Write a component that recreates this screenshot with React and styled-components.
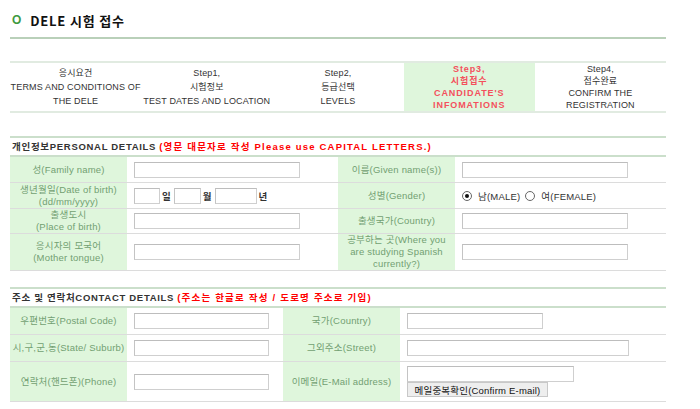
import React from "react";
import styled, { createGlobalStyle } from "styled-components";

const GlobalStyle = createGlobalStyle`
  body {
    margin: 0;
    background: #fff;
    font-family: "Liberation Sans", "Noto Sans CJK KR", sans-serif;
    font-size: 9.5px;
    color: #333;
  }
`;

const Page = styled.div`
  width: 656px;
  padding-left: 10px;
`;

const TitleBar = styled.h2`
  margin: 0;
  height: 39px;
  box-sizing: border-box;
  padding: 3px 0 0 2px;
  border-bottom: 2px solid #b9d0b9;
  display: flex;
  align-items: center;
  gap: 8px;
  font-family: "Noto Sans CJK KR", "Liberation Sans", sans-serif;
  font-size: 13px;
  font-weight: 700;
  color: #111;
  letter-spacing: 0.8px;

  .bullet {
    color: #3f9a3f;
    font-family: "Liberation Sans", sans-serif;
    font-size: 12px;
  }
`;

const Steps = styled.div`
  margin-top: 22px;
  height: 52px;
  box-sizing: border-box;
  display: grid;
  grid-template-columns: repeat(5, 1fr);
  border-top: 2px solid #e1ebe1;
  border-bottom: 2px solid #e1ebe1;
`;

const Step = styled.div`
  display: flex;
  flex-direction: column;
  justify-content: center;
  align-items: center;
  text-align: center;
  white-space: nowrap;
  font-size: 9px;
  line-height: ${(p) => p.$lh}px;
  letter-spacing: ${(p) => (p.$active ? "0.9px" : "0.15px")};
  background: ${(p) => (p.$active ? "#dff6dc" : "transparent")};
  color: ${(p) => (p.$active ? "#f4505c" : "#333")};
  font-weight: ${(p) => (p.$active ? 700 : 400)};
`;

const Section = styled.section`
  margin-top: ${(p) => p.$top}px;
`;

const SectionHead = styled.div`
  height: 21px;
  box-sizing: border-box;
  border-top: 2px solid #cbdfcb;
  border-bottom: 2px solid #cbdfcb;
  display: flex;
  align-items: center;
  padding: 0 0 1px 2px;
  font-weight: 700;
  color: #333;
  letter-spacing: 0.7px;
  white-space: nowrap;

  .note {
    color: #f00;
    margin-left: 3px;
    letter-spacing: 1.2px;
  }
`;

const Row = styled.div`
  display: grid;
  grid-template-columns: ${(p) => p.$cols};
  height: ${(p) => p.$h}px;
  box-sizing: border-box;
  border-bottom: 1px solid #dcdcdc;
`;

const Label = styled.div`
  background: #dff6dc;
  color: #72a072;
  display: flex;
  align-items: center;
  justify-content: center;
  text-align: center;
  line-height: 12px;
  letter-spacing: 0.2px;
`;

const Cell = styled.div`
  display: flex;
  flex-direction: ${(p) => (p.$stack ? "column" : "row")};
  align-items: ${(p) => (p.$stack ? "flex-start" : "center")};
  justify-content: ${(p) => (p.$stack ? "center" : "flex-start")};
  padding-left: 7px;
  color: #333;
`;

const Field = styled.input`
  width: ${(p) => p.$w}px;
  height: 16px;
  box-sizing: border-box;
  margin: 0;
  padding: 0 3px;
  border: 1px solid #cfcfcf;
  border-top-color: #bdbdbd;
  border-left-color: #c4c4c4;
  background: #fff;
  font: inherit;
`;

const Unit = styled.span`
  margin: 0 3px 0 2px;
  font-weight: 700;
  color: #333;
`;

const Radio = styled.span`
  width: 10px;
  height: 10px;
  box-sizing: border-box;
  border: 1px solid #666;
  border-radius: 50%;
  background: #fff;
  display: inline-flex;
  align-items: center;
  justify-content: center;
  margin-right: 6px;

  &::after {
    content: "";
    width: 4px;
    height: 4px;
    border-radius: 50%;
    background: ${(p) => (p.$checked ? "#111" : "transparent")};
  }
`;

const Choice = styled.label`
  display: inline-flex;
  align-items: center;
  margin-right: 5px;
  color: #333;
  letter-spacing: 0.2px;
`;

const CheckButton = styled.button`
  width: 141px;
  height: 15px;
  box-sizing: border-box;
  margin: 0;
  padding: 0;
  border: 1px solid #c8c8c8;
  background: #eeeeee;
  font: inherit;
  color: #111;
  letter-spacing: 0.2px;
`;

const personalCols = "117px 211px 117px 210px";
const contactCols = "117px 156px 117px 265px";

export default function App() {
  return (
    <>
      <GlobalStyle />
      <Page>
        <TitleBar>
          <span className="bullet">O</span>
          <span>DELE 시험 접수</span>
        </TitleBar>

        <Steps>
          <Step $lh={14}>
            <span>응시요건</span>
            <span>TERMS AND CONDITIONS OF</span>
            <span>THE DELE</span>
          </Step>
          <Step $lh={14}>
            <span>Step1,</span>
            <span>시험정보</span>
            <span>TEST DATES AND LOCATION</span>
          </Step>
          <Step $lh={14}>
            <span>Step2,</span>
            <span>등급선택</span>
            <span>LEVELS</span>
          </Step>
          <Step $lh={12} $active>
            <span>Step3,</span>
            <span>시험접수</span>
            <span>CANDIDATE'S</span>
            <span>INFOMATIONS</span>
          </Step>
          <Step $lh={12}>
            <span>Step4,</span>
            <span>접수완료</span>
            <span>CONFIRM THE</span>
            <span>REGISTRATION</span>
          </Step>
        </Steps>

        <Section $top={23}>
          <SectionHead>
            개인정보PERSONAL DETAILS
            <span className="note">(영문 대문자로 작성 Please use CAPITAL LETTERS.)</span>
          </SectionHead>
          <Row $cols={personalCols} $h={26}>
            <Label>성(Family name)</Label>
            <Cell><Field $w={166} /></Cell>
            <Label>이름(Given name(s))</Label>
            <Cell><Field $w={166} /></Cell>
          </Row>
          <Row $cols={personalCols} $h={26}>
            <Label>생년월일(Date of birth)<br />(dd/mm/yyyy)</Label>
            <Cell>
              <Field $w={26} />
              <Unit>일</Unit>
              <Field $w={27} />
              <Unit>월</Unit>
              <Field $w={42} />
              <Unit>년</Unit>
            </Cell>
            <Label>성별(Gender)</Label>
            <Cell>
              <Choice><Radio $checked />남(MALE)</Choice>
              <Choice><Radio />여(FEMALE)</Choice>
            </Cell>
          </Row>
          <Row $cols={personalCols} $h={25}>
            <Label>출생도시<br />(Place of birth)</Label>
            <Cell><Field $w={166} /></Cell>
            <Label>출생국가(Country)</Label>
            <Cell><Field $w={166} /></Cell>
          </Row>
          <Row $cols={personalCols} $h={37}>
            <Label>응시자의 모국어<br />(Mother tongue)</Label>
            <Cell><Field $w={166} /></Cell>
            <Label>공부하는 곳(Where you<br />are studying Spanish<br />currently?)</Label>
            <Cell><Field $w={166} /></Cell>
          </Row>
        </Section>

        <Section $top={16}>
          <SectionHead>
            주소 및 연락처CONTACT DETAILS
            <span className="note">(주소는 한글로 작성 / 도로명 주소로 기입)</span>
          </SectionHead>
          <Row $cols={contactCols} $h={27}>
            <Label>우편번호(Postal Code)</Label>
            <Cell><Field $w={135} /></Cell>
            <Label>국가(Country)</Label>
            <Cell><Field $w={136} /></Cell>
          </Row>
          <Row $cols={contactCols} $h={27}>
            <Label>시,구,군,동(State/ Suburb)</Label>
            <Cell><Field $w={135} /></Cell>
            <Label>그외주소(Street)</Label>
            <Cell><Field $w={222} /></Cell>
          </Row>
          <Row $cols={contactCols} $h={40}>
            <Label>연락처(핸드폰)(Phone)</Label>
            <Cell><Field $w={135} /></Cell>
            <Label>이메일(E-Mail address)</Label>
            <Cell $stack>
              <Field $w={167} />
              <CheckButton type="button">메일중복확인(Confirm E-mail)</CheckButton>
            </Cell>
          </Row>
        </Section>
      </Page>
    </>
  );
}
